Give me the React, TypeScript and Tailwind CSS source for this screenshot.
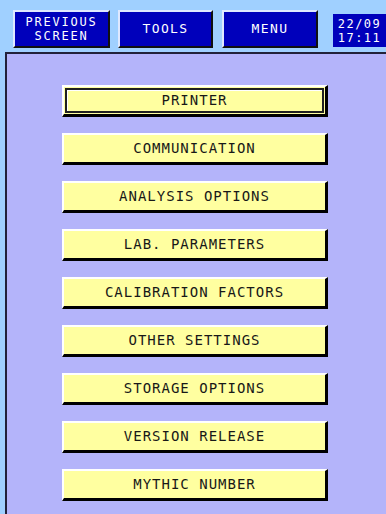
const items = [
  "PRINTER",
  "COMMUNICATION",
  "ANALYSIS OPTIONS",
  "LAB. PARAMETERS",
  "CALIBRATION FACTORS",
  "OTHER SETTINGS",
  "STORAGE OPTIONS",
  "VERSION RELEASE",
  "MYTHIC NUMBER",
];

const mono = { fontFamily: '"DejaVu Sans Mono", "Liberation Mono", monospace' };

function TopButton({ children, className }: { children: React.ReactNode; className?: string }) {
  return (
    <button
      type="button"
      className={`flex h-[38px] flex-col items-center justify-center border-l-2 border-t-2 border-b-2 border-r-2 border-l-[#dfe8ff] border-t-[#dfe8ff] border-b-[#101010] border-r-[#101010] bg-[#0000bb] text-[13px] leading-[14px] tracking-[1.4px] text-white ${className ?? ""}`}
    >
      {children}
    </button>
  );
}

function MenuButton({ label, selected }: { label: string; selected?: boolean }) {
  return (
    <button
      type="button"
      className="flex h-[32px] w-[266px] items-stretch border-l-2 border-t-2 border-b-[3px] border-r-[3px] border-l-white border-t-white border-b-black border-r-black bg-[#ffffa0] text-[14px] tracking-[1px] text-[#181818]"
    >
      <span
        className={`flex flex-1 items-center justify-center ${
          selected ? "m-[1px] border-2 border-[#202020] shadow-[inset_1px_1px_0_#ffffff]" : ""
        }`}
      >
        {label}
      </span>
    </button>
  );
}

export default function App() {
  return (
    <div className="flex h-[514px] w-[386px] flex-col overflow-hidden bg-[#a0d0ff]" style={mono}>
      <header className="flex h-[52px] shrink-0 items-center">
        <TopButton className="ml-[13px] mt-[6px] w-[97px]">
          <span className="text-[12px] tracking-[1.8px]">PREVIOUS</span>
          <span className="text-[12px] tracking-[1.8px]">SCREEN</span>
        </TopButton>
        <TopButton className="ml-[8px] mt-[6px] w-[95px]">TOOLS</TopButton>
        <TopButton className="ml-[9px] mt-[6px] w-[96px]">MENU</TopButton>
        <div className="ml-[15px] mt-[9px] flex h-[33px] flex-1 flex-col items-center justify-center bg-[#0000bb] text-[12px] leading-[14px] tracking-[1.5px] text-white">
          <span>22/09</span>
          <span>17:11</span>
        </div>
      </header>
      <main className="ml-[5px] flex flex-1 flex-col gap-[16px] border-l-2 border-t-2 border-[#22223a] bg-[#b4b4fa] pl-[55px] pt-[31px]">
        {items.map((label, i) => (
          <MenuButton key={label} label={label} selected={i === 0} />
        ))}
      </main>
    </div>
  );
}
